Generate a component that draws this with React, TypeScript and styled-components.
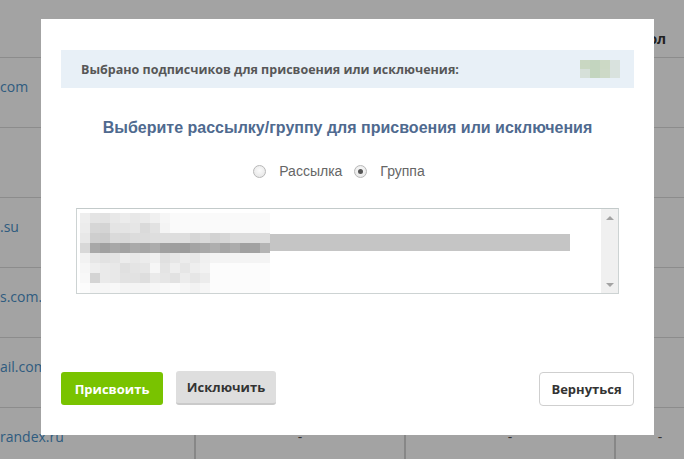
import React from "react";
import styled, { createGlobalStyle } from "styled-components";

const Global = createGlobalStyle`
  html, body { margin: 0; padding: 0; background: #fff; }
  body { font-family: "Open Sans", "Liberation Sans", sans-serif; overflow: hidden; }
  * { box-sizing: border-box; }
`;

const Table = styled.div`
  display: grid;
  grid-template-columns: 194px 210px 210px 90px;
  grid-auto-rows: 70px;
  grid-template-rows: 58px;
  width: 704px;
`;

const HeadCell = styled.div<{ $last?: boolean }>`
  border-bottom: 1px solid #dcdcdc;
  font-size: 14px;
  font-weight: 700;
  color: #333;
  padding: 29px 0 0 ${(p) => (p.$last ? "24px" : "10px")};
  line-height: 20px;
`;

const Cell = styled.div<{ $center?: boolean; $first?: boolean }>`
  border-bottom: 1px solid #dcdcdc;
  border-left: ${(p) => (p.$first ? "none" : "2px solid #d4d4d4")};
  font-size: 14px;
  line-height: 20px;
  padding-top: 19px;
  color: ${(p) => (p.$first ? "#4a90c8" : "#555")};
  text-align: ${(p) => (p.$center ? "center" : "left")};
  white-space: nowrap;
  overflow: hidden;
`;

const Overlay = styled.div`
  position: fixed;
  inset: 0;
  background: rgba(0, 0, 0, 0.36);
  padding: 19px 0 0 41px;
`;

const Modal = styled.div`
  width: 613px;
  height: 416px;
  background: #fff;
  display: flex;
  flex-direction: column;
  padding: 31px 20px 30px 20px;
`;

const InfoBar = styled.div`
  height: 38px;
  background: #e8f0f7;
  display: flex;
  align-items: center;
  justify-content: space-between;
  padding: 0 14px 0 20px;
`;

const InfoText = styled.span`
  font-family: "Open Sans", sans-serif;
  font-size: 12.5px;
  font-weight: 700;
  color: #575757;
`;

const Mosaic = styled.div<{ $cols: number; $cell: number; $rowH: number }>`
  display: grid;
  grid-template-columns: repeat(${(p) => p.$cols}, ${(p) => p.$cell}px);
  grid-auto-rows: ${(p) => p.$rowH}px;
`;

const Pix = styled.div``;

const Heading = styled.h2`
  margin: 30px 0 0;
  font-family: "Liberation Sans", Arial, sans-serif;
  font-size: 16px;
  line-height: 20px;
  font-weight: 700;
  color: #4f6a8f;
  text-align: center;
`;

const RadioRow = styled.div`
  margin-top: 23px;
  height: 20px;
  display: flex;
  justify-content: center;
  align-items: center;
  gap: 12px;
  padding-right: 17px;
  font-family: "Liberation Sans", Arial, sans-serif;
  font-size: 14px;
  color: #666;
`;

const RadioLabel = styled.label`
  display: flex;
  align-items: center;
  gap: 13px;
`;

const RadioDot = styled.span<{ $checked?: boolean }>`
  width: 13px;
  height: 13px;
  border-radius: 50%;
  border: 1px solid #b8b8b8;
  background: radial-gradient(circle at 50% 40%, #fbfbfb 0%, #e2e2e2 100%);
  display: flex;
  align-items: center;
  justify-content: center;
  &::after {
    content: "";
    width: 5px;
    height: 5px;
    border-radius: 50%;
    background: ${(p) => (p.$checked ? "#555" : "transparent")};
  }
`;

const ListBox = styled.div`
  margin: 27px 15px 0;
  height: 86px;
  border: 1px solid #cdd3d3;
  border-top-color: #c3caca;
  display: flex;
  background: #fff;
`;

const ListContent = styled.div`
  flex: 1;
  position: relative;
  padding: 4px 0 0 3px;
`;

const SelectedBar = styled.div`
  position: absolute;
  left: 193px;
  top: 25px;
  width: 300px;
  height: 17px;
  background: #c5c5c5;
`;

const ScrollBar = styled.div`
  width: 17px;
  background: #f0f0f0;
  display: flex;
  flex-direction: column;
  justify-content: space-between;
  align-items: center;
  padding: 7px 0 6px;
`;

const Arrow = styled.span<{ $down?: boolean }>`
  width: 0;
  height: 0;
  border-left: 4px solid transparent;
  border-right: 4px solid transparent;
  ${(p) => (p.$down ? "border-top: 4px solid #a3a3a3;" : "border-bottom: 4px solid #a3a3a3;")}
`;

const Footer = styled.div`
  margin-top: auto;
  display: flex;
  align-items: flex-end;
  gap: 13px;
`;

const Button = styled.button<{ $variant: "green" | "gray" | "white" }>`
  font-family: "Open Sans", sans-serif;
  font-size: 13px;
  font-weight: 700;
  border-radius: 3px;
  cursor: pointer;
  padding: 0;
  height: ${(p) => (p.$variant === "green" ? "33px" : "34px")};
  width: ${(p) => (p.$variant === "green" ? "102px" : p.$variant === "gray" ? "100px" : "95px")};
  background: ${(p) => (p.$variant === "green" ? "#79c300" : p.$variant === "gray" ? "#dedede" : "#fff")};
  color: ${(p) => (p.$variant === "green" ? "#fff" : "#333")};
  border: ${(p) => (p.$variant === "white" ? "1px solid #cfcfcf" : "none")};
  border-bottom: ${(p) =>
    p.$variant === "gray" ? "2px solid #cacaca" : p.$variant === "white" ? "1px solid #cfcfcf" : "none"};
  ${(p) => (p.$variant === "white" ? "margin-left: auto; border-radius: 4px; margin-bottom: -1px;" : "")}
`;

const gray = (v: number) => `rgb(${v},${v},${v})`;

const listRows: number[][] = [
  [238, 228, 226, 232, 236, 232, 234, 240, 246, 250, 250, 250, 250, 250, 250, 250, 250, 250, 250],
  [236, 214, 212, 228, 228, 230, 218, 226, 244, 250, 250, 250, 250, 250, 250, 250, 250, 250, 250],
  [232, 206, 204, 218, 216, 220, 220, 222, 222, 222, 222, 214, 218, 210, 214, 220, 220, 220, 220],
  [216, 168, 160, 168, 162, 170, 166, 172, 160, 158, 156, 164, 168, 174, 166, 172, 160, 162, 180],
  [242, 230, 226, 228, 236, 232, 236, 240, 224, 230, 236, 232, 240, 244, 244, 244, 244, 244, 244],
  [246, 238, 234, 232, 224, 228, 230, 246, 228, 238, 230, 238, 242, 252, 252, 252, 252, 252, 252],
  [248, 212, 234, 232, 226, 226, 222, 234, 230, 226, 236, 230, 236, 252, 252, 252, 252, 252, 252],
  [252, 246, 246, 248, 244, 244, 244, 246, 248, 250, 246, 242, 246, 252, 252, 252, 252, 252, 252],
];

const infoPix = [
  ["#c9d7c2", "#c3d5bf", "#ccd9c5", "#d9e2de"],
  ["#d6e0d9", "#c3d5bf", "#cdd9c7", "#d9e2de"],
];

const rows = [
  ["com", "", "", ""],
  ["", "", "", ""],
  [".su", "", "", ""],
  ["s.com.ua", "", "", ""],
  ["ail.com", "", "", ""],
  ["randex.ru", "-", "-", "-"],
];

export default function App() {
  return (
    <>
      <Global />
      <Table>
        <HeadCell />
        <HeadCell>Имя</HeadCell>
        <HeadCell>Телефон</HeadCell>
        <HeadCell $last>Пол</HeadCell>
        {rows.map((r, i) =>
          r.map((c, j) => (
            <Cell key={`${i}-${j}`} $first={j === 0} $center={j > 0}>
              {c}
            </Cell>
          ))
        )}
      </Table>
      <Overlay>
        <Modal>
          <InfoBar>
            <InfoText>Выбрано подписчиков для присвоения или исключения:</InfoText>
            <Mosaic $cols={4} $cell={10} $rowH={9}>
              {infoPix.flat().map((c, i) => (
                <Pix key={i} style={{ background: c }} />
              ))}
            </Mosaic>
          </InfoBar>
          <Heading>Выберите рассылку/группу для присвоения или исключения</Heading>
          <RadioRow>
            <RadioLabel>
              <RadioDot />
              Рассылка
            </RadioLabel>
            <RadioLabel>
              <RadioDot $checked />
              Группа
            </RadioLabel>
          </RadioRow>
          <ListBox>
            <ListContent>
              <SelectedBar />
              <Mosaic $cols={19} $cell={10} $rowH={10}>
                {listRows.flat().map((v, i) => (
                  <Pix key={i} style={{ background: gray(v) }} />
                ))}
              </Mosaic>
            </ListContent>
            <ScrollBar>
              <Arrow />
              <Arrow $down />
            </ScrollBar>
          </ListBox>
          <Footer>
            <Button $variant="green">Присвоить</Button>
            <Button $variant="gray">Исключить</Button>
            <Button $variant="white">Вернуться</Button>
          </Footer>
        </Modal>
      </Overlay>
    </>
  );
}
